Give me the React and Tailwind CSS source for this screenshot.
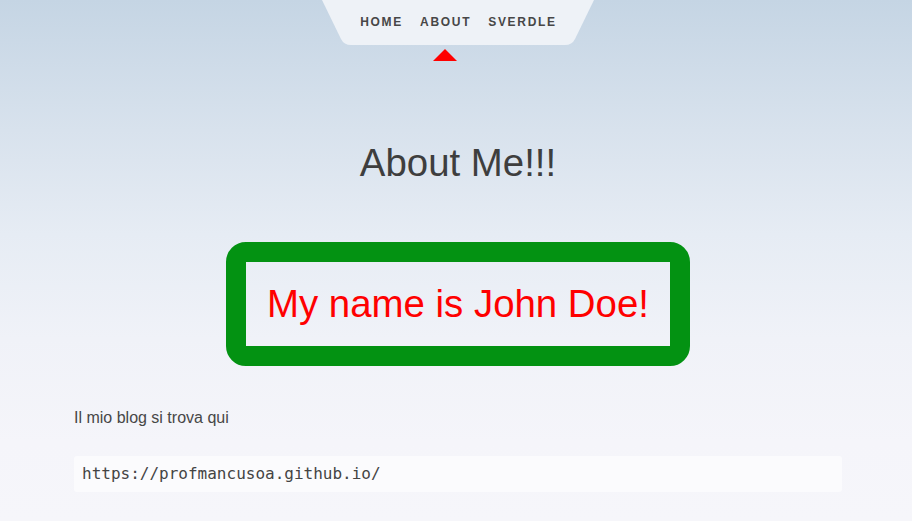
export default function App() {
  return (
    <div
      className="w-[912px] h-[521px] overflow-hidden flex flex-col items-center"
      style={{
        background:
          "linear-gradient(to bottom, #c5d5e4 0%, #d8e2ed 25%, #e6ecf4 45%, #f0f2f8 65%, #f5f5fa 85%, #f6f6fa 100%)",
        fontFamily: '"Liberation Sans", Arial, sans-serif',
      }}
    >
      {/* nav */}
      <div className="relative w-[272px] h-[45px] ml-[4px] flex items-center justify-center">
        <svg
          className="absolute inset-0"
          width="272"
          height="45"
          viewBox="0 0 272 45"
        >
          <path
            d="M0 0 L272 0 L253 39 Q250 45 243 45 L29 45 Q22 45 19 39 Z"
            fill="#eef2f7"
          />
        </svg>
        <div className="relative flex gap-[17px] text-[12px] font-bold tracking-[1.7px] text-[#474747] pb-[1px] ml-[1px]">
          <span>HOME</span>
          <span className="relative">
            ABOUT
            <svg
              className="absolute left-[13px] top-[36px]"
              width="24"
              height="12"
              viewBox="0 0 24 12"
            >
              <path d="M12 0 L24 12 L0 12 Z" fill="#ff0000" />
            </svg>
          </span>
          <span>SVERDLE</span>
        </div>
      </div>

      <div className="w-[768px] ml-[4px] flex flex-col">
        <h1 className="mt-[96px] text-center text-[38.4px] leading-[44px] text-[#3e3e3e] font-normal">
          About Me!!!
        </h1>

        <div className="mt-[57px] flex justify-center">
          <div className="w-[464px] h-[124px] border-[20px] border-[#039212] rounded-[20px] flex items-center justify-center">
            <span className="text-[38.4px] leading-[44px] text-[#ff0000]">
              My name is John Doe!
            </span>
          </div>
        </div>

        <p className="mt-[40px] text-[16px] leading-[24px] text-[#474747]">
          Il mio blog si trova qui
        </p>

        <div
          className="mt-[26px] h-[36px] rounded-[3px] bg-white/60 flex items-center px-[8px] text-[16px] text-[#444444]"
          style={{ fontFamily: '"DejaVu Sans Mono", monospace' }}
        >
          https://profmancusoa.github.io/
        </div>
      </div>
    </div>
  );
}
